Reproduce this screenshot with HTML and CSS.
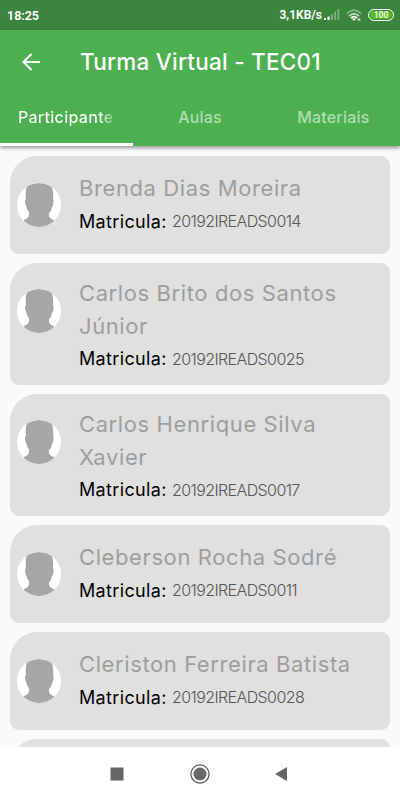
FILE: index.html
```html
<!DOCTYPE html>
<html lang="pt-BR">
<head>
  <meta charset="UTF-8">
  <meta name="viewport" content="width=device-width, initial-scale=1.0">
  <title>Turma Virtual</title>
  <link rel="stylesheet" href="styles.css">
</head>
<body>
  <!-- Avatar shape shared by all cards -->
  <svg class="defs" width="0" height="0">
    <defs>
      <clipPath id="round"><circle cx="22" cy="22" r="22"/></clipPath>
      <symbol id="avatar" viewBox="0 0 44 44">
        <g clip-path="url(#round)">
          <rect width="44" height="44" fill="#fff"/>
          <path fill="#a6a6a6" d="M10 3Q22-3 34.500 3Q37 9 36 16L36.500 17Q36.500 23 35 24Q34.500 28 32 30Q31 36 37 37V44H7V37Q13 35 12 29Q10 27 9.500 24Q8 22 8 17L9 16Q8 8 10 3Z"/>
        </g>
      </symbol>
    </defs>
  </svg>

  <div id="app">
    <div class="status-bar">
      <span class="clock">18:25</span>
      <span class="speed">3,1KB/s</span>
      <svg class="signal" width="16" height="12" viewBox="0 0 16 12">
        <path fill="#fff" d="M0 9h2v2H0zM3.500 7.500h2V11h-2z"/>
        <path fill="#fff" opacity=".35" d="M7 5h1.800v6H7zM10.200 2.500H12V11h-1.800zM13.400 0h1.800v11h-1.800z"/>
      </svg>
      <svg class="wifi" width="17" height="13" viewBox="0 0 17 13">
        <g fill="none" stroke="#fff" stroke-width="1.700">
          <path opacity=".4" d="M.8 4.500Q8 -2.200 15.200 4.500"/>
          <path opacity=".65" d="M3 7Q8 2.500 13 7"/>
          <path d="M5 9Q8 6.300 11 9"/>
        </g>
        <path fill="#fff" d="M5.800 9.500H10L8 12z"/>
        <circle cx="13" cy="10.500" r="1.600" fill="#fff" opacity=".6"/>
      </svg>
      <span class="battery">100</span>
    </div>

    <header>
      <div class="title-bar">
        <svg class="back" width="18" height="18" viewBox="0 0 18 18">
          <path fill="none" stroke="#fff" stroke-width="2" d="M18 9H1.500M9.500 1L1.500 9L9.500 17"/>
        </svg>
        <h1>Turma Virtual - TEC01</h1>
      </div>
      <nav class="tabs">
        <button class="active"><span class="fade">Participante</span></button>
        <button><span>Aulas</span></button>
        <button><span>Materiais</span></button>
      </nav>
    </header>

    <main>
      <div class="card">
        <svg class="avatar"><use href="#avatar"/></svg>
        <div class="info">
          <h2>Brenda Dias Moreira</h2>
          <p><b>Matricula:</b><span>20192IREADS0014</span></p>
        </div>
      </div>
      <div class="card long">
        <svg class="avatar"><use href="#avatar"/></svg>
        <div class="info">
          <h2>Carlos Brito dos Santos<br>Júnior</h2>
          <p><b>Matricula:</b><span>20192IREADS0025</span></p>
        </div>
      </div>
      <div class="card long">
        <svg class="avatar"><use href="#avatar"/></svg>
        <div class="info">
          <h2>Carlos Henrique Silva<br>Xavier</h2>
          <p><b>Matricula:</b><span>20192IREADS0017</span></p>
        </div>
      </div>
      <div class="card">
        <svg class="avatar"><use href="#avatar"/></svg>
        <div class="info">
          <h2>Cleberson Rocha Sodré</h2>
          <p><b>Matricula:</b><span>20192IREADS0011</span></p>
        </div>
      </div>
      <div class="card">
        <svg class="avatar"><use href="#avatar"/></svg>
        <div class="info">
          <h2>Cleriston Ferreira Batista</h2>
          <p><b>Matricula:</b><span>20192IREADS0028</span></p>
        </div>
      </div>
      <div class="card"></div>
    </main>

    <footer class="nav-bar">
      <svg width="20" height="20" viewBox="0 0 20 20"><rect x="3.500" y="3.500" width="13" height="13" fill="#666"/></svg>
      <svg width="20" height="20" viewBox="0 0 20 20">
        <circle cx="10" cy="10" r="9.100" fill="none" stroke="#555" stroke-width="1.200"/>
        <circle cx="10" cy="10" r="6.500" fill="#666"/>
      </svg>
      <svg width="20" height="20" viewBox="0 0 20 20"><path d="M2 10L14 3V17z" fill="#666"/></svg>
    </footer>
  </div>
</body>
</html>
```

FILE: styles.css
```css
* {
  box-sizing: border-box;
}

body {
  margin: 0;
  font-family: Inter, "Open Sans", sans-serif;
  background-color: #fafafa;
}

.defs {
  display: block;
}

#app {
  display: flex;
  flex-direction: column;
  height: 800px;
  overflow: hidden;
}

/* Status bar */
.status-bar {
  display: flex;
  align-items: center;
  flex: none;
  height: 30px;
  padding: 0 6px 0 7px;
  background-color: #3b853e;
  color: white;
  font-family: Roboto, sans-serif;
  font-size: 12.5px;
  font-weight: 600;
}

.speed {
  margin-left: auto;
  font-size: 12px;
}

.signal {
  margin-left: 2px;
}

.wifi {
  margin-left: 6px;
}

.battery {
  width: 26px;
  height: 12px;
  margin-left: 5px;
  border: 1px solid white;
  border-radius: 6px;
  box-shadow: inset 0 0 0 1px #3b853e;
  background-color: #54bb1d;
  font-size: 8.5px;
  line-height: 10px;
  text-align: center;
}

/* Header */
header {
  flex: none;
  height: 116px;
  background-color: #4caf50;
  color: white;
  box-shadow: 0 2px 4px rgba(0, 0, 0, 0.4);
  z-index: 1;
}

.title-bar {
  display: flex;
  align-items: center;
  height: 63px;
  padding-left: 22px;
}

h1 {
  margin: 0 0 0 40px;
  font-size: 22.5px;
  font-weight: 500;
  letter-spacing: 0.25px;
  white-space: nowrap;
}

.tabs {
  display: grid;
  grid-template-columns: repeat(3, 1fr);
  height: 53px;
}

.tabs button {
  padding: 0 0 2px;
  border: none;
  border-bottom: 3px solid transparent;
  background: none;
  color: #b2deb4;
  font: 500 16px Inter, sans-serif;
  letter-spacing: 0.2px;
}

.tabs .active {
  padding-right: 2px;
  border-bottom-color: white;
  color: white;
}

.fade {
  background: linear-gradient(90deg, white 85%, rgba(255, 255, 255, 0.3));
  background-clip: text;
  -webkit-background-clip: text;
  color: transparent;
  letter-spacing: 0.3px;
}

/* Participants */
main {
  display: flex;
  flex-direction: column;
  flex: 1;
  min-height: 0;
  gap: 9px;
  padding: 10px 10px 0;
  overflow: hidden;
}

.card {
  display: flex;
  flex: none;
  min-height: 97.9px;
  padding-left: 7px;
  border-radius: 27px 9px 9px 9px;
  background-color: #e0e0e0;
}

.avatar {
  flex: none;
  width: 44px;
  height: 44px;
  margin-top: 27px;
}

.info {
  align-self: center;
  margin-left: 18px;
  padding: 12px 0;
}

.long .info {
  padding: 14px 0 10px;
}

.long .avatar {
  margin-top: 26px;
}

h2 {
  margin: 0;
  color: #9e9e9e;
  font-size: 22px;
  font-weight: 400;
  letter-spacing: 0.6px;
  line-height: 33px;
  white-space: nowrap;
}

p {
  display: flex;
  align-items: center;
  height: 32px;
  margin: 0;
}

b {
  width: 93px;
  font-size: 18px;
  font-weight: 400;
  letter-spacing: 0.35px;
}

p span {
  color: #555;
  font-size: 16px;
  font-weight: 300;
  letter-spacing: -0.6px;
}

/* Navigation bar */
.nav-bar {
  display: flex;
  align-items: center;
  justify-content: center;
  flex: none;
  gap: 63px;
  height: 53px;
  background-color: white;
}
```
